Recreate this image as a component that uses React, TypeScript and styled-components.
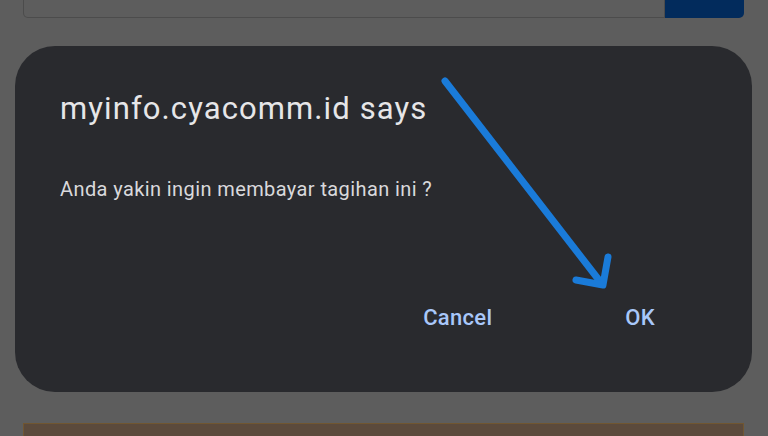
import styled, { createGlobalStyle } from "styled-components";

const GlobalStyle = createGlobalStyle`
  html, body {
    margin: 0;
    padding: 0;
    background-color: #5d5d5d;
    font-family: Roboto, "Noto Sans", Arial, sans-serif;
  }
  body {
    width: 768px;
    height: 436px;
    overflow: hidden;
  }
`;

const Page = styled.div`
  display: flex;
  flex-direction: column;
  width: 768px;
  height: 436px;
  overflow: hidden;

  & > * {
    flex-shrink: 0;
  }
`;

const SearchRow = styled.div`
  display: flex;
  height: 18px;
  margin: 0 24px 0 23px;
`;

const SearchInput = styled.div`
  flex: 1;
  border: 1px solid #4c4c4c;
  border-top: none;
  border-radius: 0 0 0 5px;
`;

const SearchButton = styled.div`
  width: 79px;
  background-color: #022b5c;
  border-radius: 0 0 5px 0;
`;

const Dialog = styled.div`
  position: relative;
  display: flex;
  flex-direction: column;
  box-sizing: border-box;
  width: 737px;
  height: 346px;
  margin: 28px 0 0 15px;
  padding: 44px 45px 0 45px;
  background-color: #292a2e;
  border-radius: 40px;
`;

const Title = styled.h1`
  margin: 0;
  font-size: 31px;
  line-height: 38px;
  font-weight: 400;
  color: #e6e6e8;
  letter-spacing: 1.1px;
`;

const Message = styled.p`
  margin: 49px 0 0 0;
  font-size: 20px;
  line-height: 24px;
  color: #d9d9dc;
  letter-spacing: 0.4px;
`;

const Actions = styled.div`
  display: flex;
  justify-content: flex-end;
  gap: 133px;
  margin-top: auto;
  margin-bottom: 61px;
  padding-right: 52px;
`;

const ActionButton = styled.button`
  padding: 0;
  border: none;
  background: none;
  font-family: inherit;
  font-size: 22px;
  font-weight: 500;
  line-height: 26px;
  letter-spacing: 0.3px;
  color: #a8c7fa;
`;

const Arrow = styled.svg`
  position: absolute;
  left: 0;
  top: 0;
  pointer-events: none;
`;

const Notice = styled.div`
  height: 30px;
  margin: 31px 24px 0 23px;
  background-color: #5b4a3c;
  border: 1px solid #705631;
  border-bottom: none;
`;

const App = () => {
  return (
    <Page>
      <GlobalStyle />
      <SearchRow>
        <SearchInput />
        <SearchButton />
      </SearchRow>
      <Dialog>
        <Title>myinfo.cyacomm.id says</Title>
        <Message>Anda yakin ingin membayar tagihan ini ?</Message>
        <Actions>
          <ActionButton>Cancel</ActionButton>
          <ActionButton>OK</ActionButton>
        </Actions>
        <Arrow width="737" height="346" viewBox="0 0 737 346">
          <g
            fill="none"
            stroke="#1a7bd9"
            strokeWidth="7"
            strokeLinecap="round"
            strokeLinejoin="round"
          >
            <path d="M430 35 L587 238" />
            <path d="M561 234 L588 239 L593 211" />
          </g>
        </Arrow>
      </Dialog>
      <Notice />
    </Page>
  );
};

export default App;
